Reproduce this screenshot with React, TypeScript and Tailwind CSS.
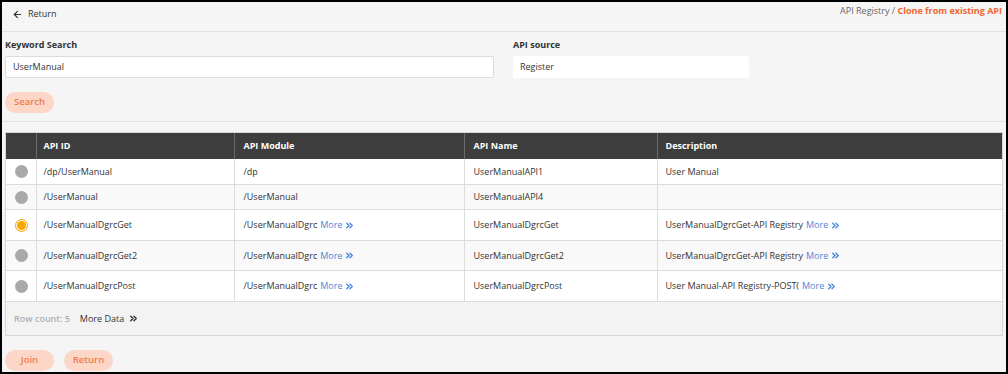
import { ArrowLeft, ChevronsRight } from "lucide-react";

type Row = {
  id: string;
  module: string;
  moduleMore?: boolean;
  name: string;
  desc: string;
  descMore?: boolean;
  selected?: boolean;
  h: string;
};

const rows: Row[] = [
  { id: "/dp/UserManual", module: "/dp", name: "UserManualAPI1", desc: "User Manual", h: "h-[26px]" },
  { id: "/UserManual", module: "/UserManual", name: "UserManualAPI4", desc: "", h: "h-[25px]" },
  {
    id: "/UserManualDgrcGet",
    module: "/UserManualDgrc",
    moduleMore: true,
    name: "UserManualDgrcGet",
    desc: "UserManualDgrcGet-API Registry",
    descMore: true,
    selected: true,
    h: "h-[31px]",
  },
  {
    id: "/UserManualDgrcGet2",
    module: "/UserManualDgrc",
    moduleMore: true,
    name: "UserManualDgrcGet2",
    desc: "UserManualDgrcGet-API Registry",
    descMore: true,
    h: "h-[30px]",
  },
  {
    id: "/UserManualDgrcPost",
    module: "/UserManualDgrc",
    moduleMore: true,
    name: "UserManualDgrcPost",
    desc: "User Manual-API Registry-POST(",
    descMore: true,
    h: "h-[31px]",
  },
];

function More() {
  return (
    <span className="ml-[3px] inline-flex items-center text-[#4a86d8]">
      More
      <ChevronsRight className="ml-[2px] h-[11px] w-[11px]" strokeWidth={3} />
    </span>
  );
}

function Radio({ selected }: { selected?: boolean }) {
  if (selected) {
    return (
      <span className="flex h-[13px] w-[13px] items-center justify-center rounded-full border border-[#f5a000] bg-white">
        <span className="h-[9px] w-[9px] rounded-full bg-[#f7a800]" />
      </span>
    );
  }
  return <span className="block h-[13px] w-[13px] rounded-full bg-[#a9a9a9]" />;
}

function PillButton({ label }: { label: string }) {
  return (
    <button className="h-[21px] w-[49px] rounded-full bg-[#fcd6c6] text-[9.5px] font-semibold text-[#ef7b4e]">
      {label}
    </button>
  );
}

export default function App() {
  return (
    <div
      className="h-[374px] w-[1008px] overflow-hidden border-2 border-black bg-[#f5f5f5] text-[9px] text-[#333]"
      style={{ fontFamily: '"Open Sans", "Noto Sans", sans-serif' }}
    >
      {/* Top bar */}
      <div className="flex h-[30px] items-center justify-between border-b border-[#e2e2e2] pl-[10px] pr-[4px]">
        <div className="-mt-[5px] flex items-center gap-[5px] text-[#333]">
          <ArrowLeft className="h-[11px] w-[11px]" strokeWidth={2.5} />
          <span>Return</span>
        </div>
        <div className="-mt-[11px] text-[#666]">
          API Registry /{" "}
          <span className="font-bold text-[#f2662f]">Clone from existing API</span>
        </div>
      </div>

      {/* Search form */}
      <div className="border-b border-[#e2e2e2] px-[3px] pb-[8px] pt-[6px]">
        <div className="flex gap-[19px]">
          <div className="flex w-[489px] flex-col">
            <label className="mb-[4px] font-bold text-[#333]">Keyword Search</label>
            <div className="flex h-[22px] items-center rounded-[2px] border border-[#dcdcdc] bg-white px-[7px]">
              UserManual
            </div>
          </div>
          <div className="flex w-[236px] flex-col">
            <label className="mb-[4px] font-bold text-[#333]">API source</label>
            <div className="flex h-[22px] items-center rounded-[2px] bg-white px-[7px]">
              Register
            </div>
          </div>
        </div>
        <div className="mt-[14px]">
          <PillButton label="Search" />
        </div>
      </div>

      {/* Table */}
      <div className="mx-[3px] mt-[10px] border border-[#d6d6d6] bg-[#f3f3f3]">
        <table className="w-full border-collapse">
          <colgroup>
            <col className="w-[30px]" />
            <col className="w-[198px]" />
            <col className="w-[230px]" />
            <col className="w-[193px]" />
            <col />
          </colgroup>
          <thead>
            <tr className="h-[26px] bg-[#3d3d3d] text-left font-bold text-white">
              <th className="border-r border-[#6a6a6a]" />
              <th className="border-r border-[#6a6a6a] px-[7px]">API ID</th>
              <th className="border-r border-[#6a6a6a] px-[9px]">API Module</th>
              <th className="border-r border-[#6a6a6a] px-[9px]">API Name</th>
              <th className="px-[8px]">Description</th>
            </tr>
          </thead>
          <tbody>
            {rows.map((r, i) => (
              <tr
                key={r.id}
                className={
                  (i % 2 === 1 ? "bg-[#f9f9f9] " : "bg-white ") +
                  r.h +
                  " border-b border-[#dcdcdc]"
                }
              >
                <td className="border-r border-[#dcdcdc] pl-[9px]">
                  <Radio selected={r.selected} />
                </td>
                <td className="border-r border-[#dcdcdc] px-[7px]">{r.id}</td>
                <td className="border-r border-[#dcdcdc] px-[9px]">
                  <span className="-mt-[3px] inline-flex items-center">
                    {r.module}
                    {r.moduleMore && <More />}
                  </span>
                </td>
                <td className="border-r border-[#dcdcdc] px-[9px]">{r.name}</td>
                <td className="px-[8px]">
                  <span className="-mt-[3px] inline-flex items-center">
                    {r.desc}
                    {r.descMore && <More />}
                  </span>
                </td>
              </tr>
            ))}
          </tbody>
        </table>
        <div className="flex h-[33px] items-center gap-[10px] px-[8px]">
          <span className="font-semibold text-[#b0b0b0]">Row count: 5</span>
          <span className="inline-flex items-center text-[#333]">
            More Data
            <ChevronsRight className="ml-[4px] h-[11px] w-[11px]" strokeWidth={3} />
          </span>
        </div>
      </div>

      {/* Bottom buttons */}
      <div className="mt-[14px] flex gap-[10px] px-[3px]">
        <PillButton label="Join" />
        <PillButton label="Return" />
      </div>
    </div>
  );
}
